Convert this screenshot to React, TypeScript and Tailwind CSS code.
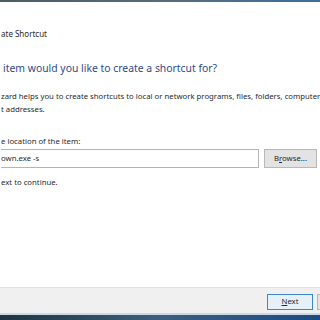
import React from "react";

export default function App() {
  const font = { fontFamily: '"Noto Sans", "Open Sans", sans-serif' };
  return (
    <div className="w-[320px] h-[320px] overflow-hidden bg-white flex flex-col" style={font}>
      <div className="h-[2px] bg-gradient-to-r from-[#4c5d64] via-[#566c78] to-[#3f6e9e] shrink-0" />
      <div className="flex-1 flex flex-col bg-white pl-[1px]">
        <div className="mt-[26px] h-[12px] flex items-center text-[8px] text-[#2a2a2a] whitespace-nowrap">ate Shortcut</div>
        <div className="mt-[21px] h-[16px] flex items-center text-[10.4px] text-[#2f4987] whitespace-nowrap pl-[2px]">
          item would you like to create a shortcut for?
        </div>
        <div className="mt-[13px] text-[7.75px] leading-[13px] text-[#2a2a2a] whitespace-nowrap">
          <div>zard helps you to create shortcuts to local or network programs, files, folders, computer</div>
          <div>t addresses.</div>
        </div>
        <div className="mt-[20px] h-[12px] flex items-center text-[7.75px] text-[#2a2a2a] whitespace-nowrap">e location of the item:</div>
        <div className="mt-[1px] flex items-center">
          <div className="w-[258px] h-[19px] border border-[#b4b4b4] border-l-0 bg-white flex items-center text-[7.75px] text-[#2a2a2a]">
            own.exe -s
          </div>
          <div className="ml-[5px] w-[53px] h-[19px] border border-[#b8b8b8] bg-[#e3e3e3] flex items-center justify-center text-[7.75px] text-[#2a2a2a]">
            <span>B<span className="underline">r</span>owse...</span>
          </div>
        </div>
        <div className="mt-[9px] h-[12px] flex items-center text-[7.75px] text-[#2a2a2a] whitespace-nowrap">ext to continue.</div>
      </div>
      <div className="h-[26px] shrink-0 bg-[#f0f0f0] border-t border-[#e2e2e2] flex items-center justify-end pt-[2px]">
        <div className="w-[46px] h-[16px] border border-[#3d86c9] bg-[#e6f0f9] flex items-center justify-center text-[7.75px] text-[#2a2a2a]">
          <span><span className="underline">N</span>ext</span>
        </div>
        <div className="ml-[4px] w-[3px] h-[16px] border border-r-0 border-[#b8b8b8] bg-[#e3e3e3]" />
      </div>
      <div className="h-[2px] bg-[#c9d9e6] shrink-0" />
      <div className="h-[5px] shrink-0 bg-gradient-to-r from-[#1f3440] via-[#3d5f7e] to-[#1d4a85]" />
    </div>
  );
}
